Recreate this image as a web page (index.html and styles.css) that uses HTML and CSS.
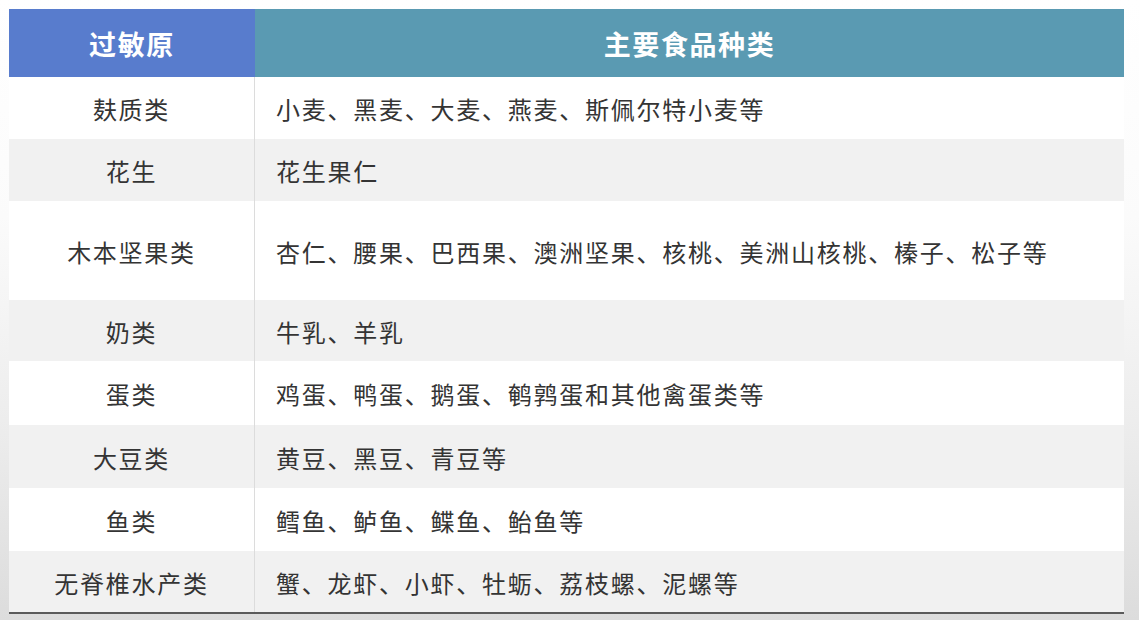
FILE: index.html
```html
<!DOCTYPE html>
<html lang="zh">
<head>
<meta charset="utf-8">
<link rel="stylesheet" href="styles.css">
</head>
<body>
<div class="table">
  <div class="head head-a">过敏原</div>
  <div class="head head-b">主要食品种类</div>

  <div class="cell name r1">麸质类</div>
  <div class="cell items r1">小麦、黑麦、大麦、燕麦、斯佩尔特小麦等</div>

  <div class="cell name alt r2">花生</div>
  <div class="cell items alt r2">花生果仁</div>

  <div class="cell name r3">木本坚果类</div>
  <div class="cell items r3">杏仁、腰果、巴西果、澳洲坚果、核桃、美洲山核桃、榛子、松子等</div>

  <div class="cell name alt r4">奶类</div>
  <div class="cell items alt r4">牛乳、羊乳</div>

  <div class="cell name r5">蛋类</div>
  <div class="cell items r5">鸡蛋、鸭蛋、鹅蛋、鹌鹑蛋和其他禽蛋类等</div>

  <div class="cell name alt r6">大豆类</div>
  <div class="cell items alt r6">黄豆、黑豆、青豆等</div>

  <div class="cell name r7">鱼类</div>
  <div class="cell items r7">鳕鱼、鲈鱼、鲽鱼、鲐鱼等</div>

  <div class="cell name alt r8">无脊椎水产类</div>
  <div class="cell items alt r8">蟹、龙虾、小虾、牡蛎、荔枝螺、泥螺等</div>
</div>
</body>
</html>
```

FILE: styles.css
```css
html, body {
  margin: 0;
  height: 100%;
}
body {
  padding: 9px 0 0 9px;
  box-sizing: border-box;
  background: linear-gradient(to bottom, #ffffff 0%, #fbfbfb 35%, #ececec 70%, #dcdcdc 100%);
  font-family: "Noto Sans CJK SC", "Noto Sans", sans-serif;
  color: #343434;
}
.table {
  width: 1115px;
  display: grid;
  grid-template-columns: 246px 1fr;
  grid-template-rows: 68px 62px 62px 99px 61px 64px 63px 63px 61px;
  border-bottom: 2px solid #5a5a5a;
  background: #fff;
}
.head {
  display: flex;
  align-items: center;
  justify-content: center;
  color: #fff;
  font-weight: bold;
  font-size: 27px;
  letter-spacing: 1.6px;
}
.head-a { background: #587ccd; }
.head-b { background: #5a9ab2; }
.cell {
  display: flex;
  align-items: center;
  font-size: 24px;
  letter-spacing: 1.75px;
  background: #fff;
  padding-top: 1px;
}
.cell.alt { background: #f1f1f1; }
.name {
  justify-content: center;
  border-right: 1px solid #dcdcdc;
}
.items {
  padding-left: 21px;
}
```
